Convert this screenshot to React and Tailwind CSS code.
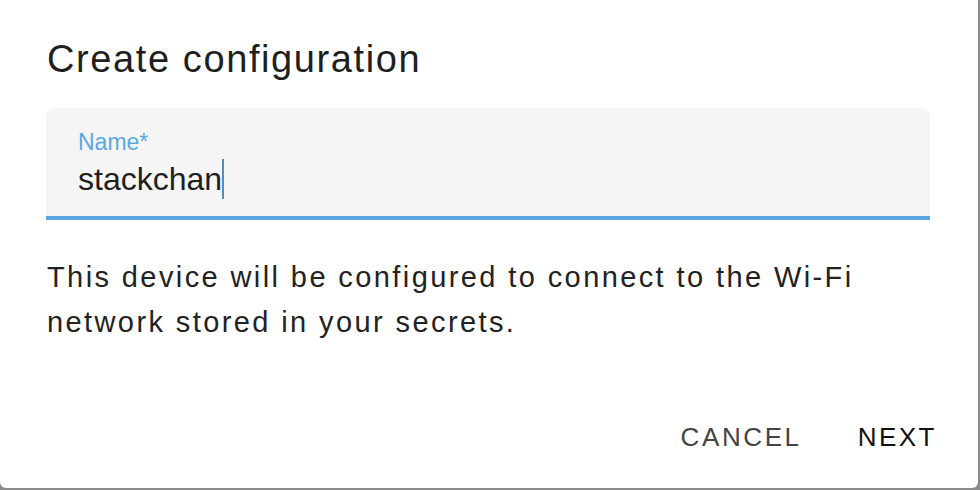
export default function App() {
  return (
    <div
      className="w-[980px] h-[490px] bg-[#8c8c8c] overflow-hidden"
      style={{ fontFamily: '"Liberation Sans", Arial, sans-serif' }}
    >
      <div className="w-[978px] h-[488px] bg-white rounded-b-[6px] flex flex-col">
        <h2 className="pl-[47px] pt-[37px] text-[38px] leading-[44px] tracking-[1.6px] text-[#1f1f1f] font-normal">
          Create configuration
        </h2>

        <div className="mx-[46px] mt-[27px] w-[884px] h-[112px] bg-[#f5f5f5] rounded-t-[8px] border-b-4 border-[#58a6dd] pl-[32px] pt-[20px] flex flex-col">
          <span className="text-[23px] leading-[28px] text-[#5aa9e0]">Name*</span>
          <div className="flex items-center mt-[3px]">
            <span className="text-[32px] leading-[38px] text-[#1f1f1f]">stackchan</span>
            <span className="w-[2px] h-[40px] bg-[#4a90c8]" />
          </div>
        </div>

        <p className="mx-[47px] mt-[35px] text-[29px] leading-[45px] tracking-[2.4px] text-[#222]">
          This device will be configured to connect to the Wi-Fi
          <br />
          network stored in your secrets.
        </p>

        <div className="mt-auto mb-[36px] mr-[41px] flex justify-end items-center gap-[56px]">
          <button className="text-[26px] leading-[30px] tracking-[2.6px] text-[#444]">CANCEL</button>
          <button className="text-[26px] leading-[30px] tracking-[2.5px] text-[#111]">NEXT</button>
        </div>
      </div>
    </div>
  );
}
